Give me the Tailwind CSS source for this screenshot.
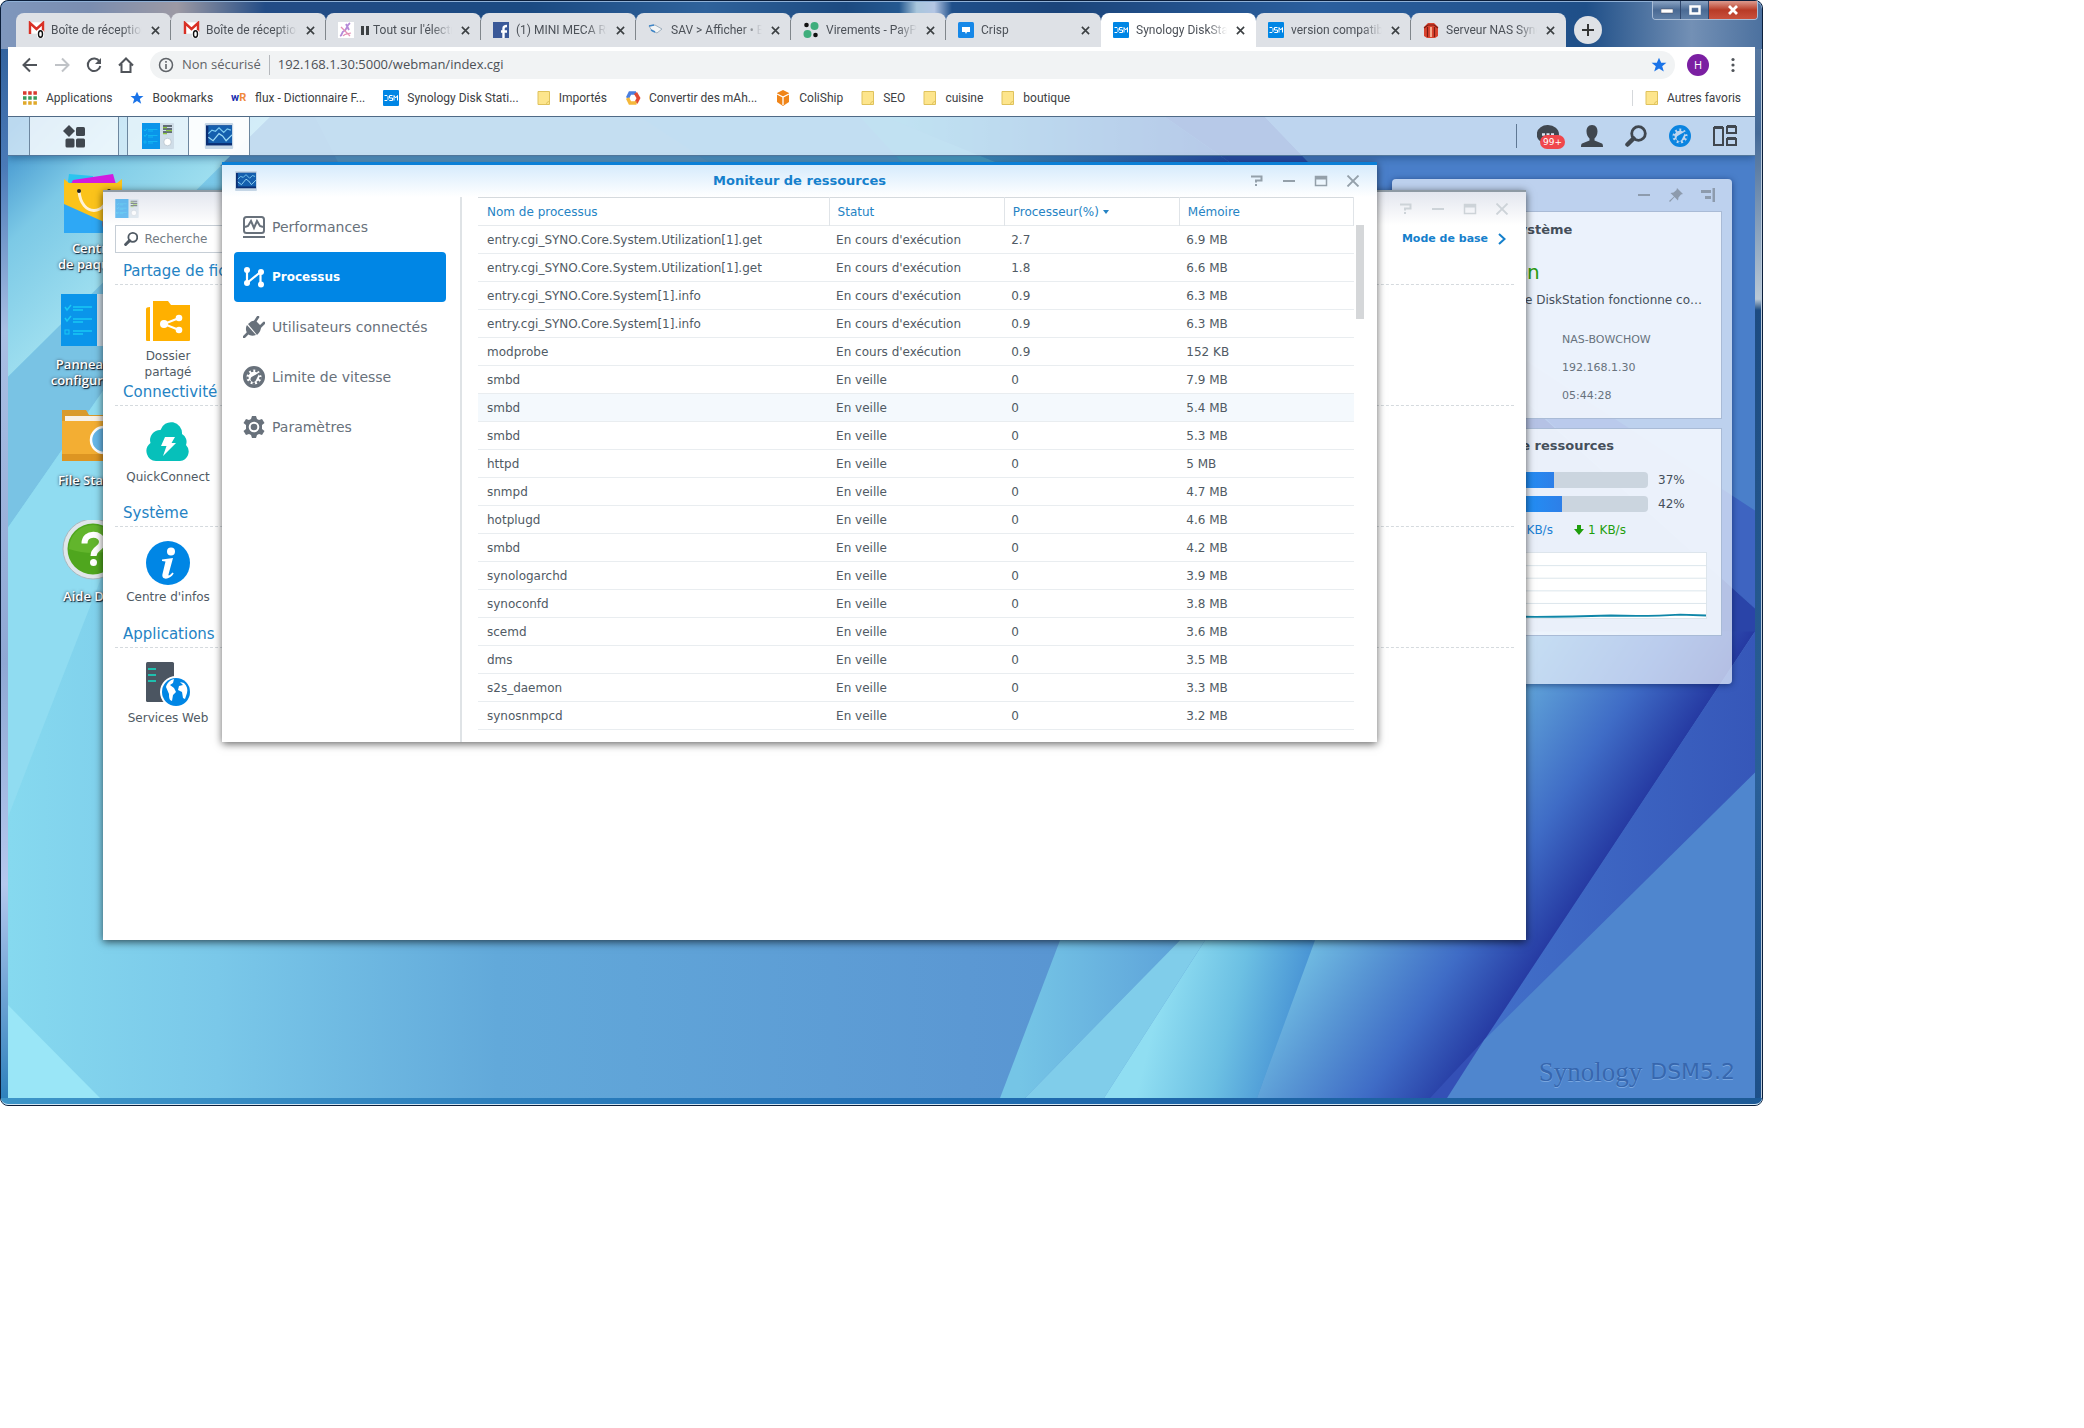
<!DOCTYPE html>
<html lang="fr">
<head>
  <meta charset="UTF-8" />
  <meta name="viewport" content="width=device-width, initial-scale=1.0" />
  <title>Synology DiskStation</title>
  <script src="https://cdn.jsdelivr.net/npm/@tailwindcss/browser@4"></script>
</head>
<body class="min-h-screen bg-white font-['DejaVu_Sans',Verdana,sans-serif] text-xs text-[#505a64]">

  <!-- shared symbols -->
  <svg class="hidden">
    <symbol id="i-x" viewBox="0 0 10 10"><path d="M1 1l8 8M9 1L1 9" stroke="currentColor" stroke-width="1.8" fill="none" /></symbol>
    <symbol id="i-dsm" viewBox="0 0 16 16">
      <rect width="16" height="16" rx="1" fill="#0086e5" />
      <path d="M1.500 5.500h2.500l1 1v3l-1 1H1.500M9.500 5.500H6.500V8h3v2.500H6.300M11 10.500v-5l1.700 2.500 1.800-2.500v5" stroke="#fff" stroke-width="1" fill="none" />
    </symbol>
    <symbol id="i-gmail" viewBox="0 0 18 18">
      <path d="M1 1h15v12H1z" fill="#fff" stroke="#ddd" stroke-width=".6" />
      <path d="M2 13V2l6.500 6L15 2v9" fill="none" stroke="#d93025" stroke-width="2.400" />
      <rect x="9" y="9" width="7" height="8" rx="2" fill="#fff" />
      <ellipse cx="12.500" cy="13" rx="2" ry="3.200" fill="#fff" stroke="#111" stroke-width="1.400" />
    </symbol>
    <symbol id="i-folder" viewBox="0 0 14 16"><path d="M1 1.500h11.500v13H1z" fill="#fde58c" stroke="#dfc25c" /><path d="M9.500 14.500c0-2 1-3 3-3" fill="none" stroke="#dfc25c" /></symbol>
    <symbol id="i-star" viewBox="0 0 16 16"><path d="M8 .8l2.200 5h5.200l-4.200 3.400 1.600 5.300L8 11.400l-4.800 3.100 1.600-5.300L.6 5.800h5.200z" fill="#1a73e8" /></symbol>
    <symbol id="i-search" viewBox="0 0 22 22"><circle cx="13.500" cy="8.500" r="6.800" fill="none" stroke="currentColor" stroke-width="2.800" /><path d="M8.500 13.500L2.500 19.500" stroke="currentColor" stroke-width="4.500" stroke-linecap="round" /></symbol>
    <symbol id="i-gauge" viewBox="0 0 22 22">
      <circle cx="11" cy="11" r="9.300" fill="none" stroke="currentColor" stroke-width="3.400" />
      <circle cx="11" cy="11" r="6.600" fill="none" stroke="currentColor" stroke-width="2.400" stroke-dasharray="2.600 2" />
      <path d="M17 6l-4 8a2.800 2.800 0 1 1-3.600-3.400z" fill="currentColor" />
    </symbol>
    <symbol id="i-monitor" viewBox="0 0 24 22">
      <rect width="24" height="22" rx="1" fill="#c5d6e6" /><rect x="1" y="2" width="22" height="17" fill="#0b2f74" /><rect x="3" y="2" width="20" height="15" fill="#155fae" />
      <path d="M3 9l3-3 3 1 3-3 4 4 3-3 3 1" fill="none" stroke="#7ecbf2" stroke-width="1" /><path d="M3 12l4 3 5-6 3 2 3 4 5-5" fill="none" stroke="#9edcf7" stroke-width="1" />
    </symbol>
    <symbol id="i-panel" viewBox="0 0 64 52">
      <rect width="64" height="52" rx="2" fill="#cfdde8" /><rect width="36" height="52" fill="#0a95ea" />
      <path d="M4 13l2 3 4-5M4 24l2 3 4-5" stroke="#19c8f5" stroke-width="1.500" fill="none" /><rect x="4" y="36" width="4" height="4" fill="none" stroke="#19c8f5" />
      <path d="M12 13h19M12 16h10M12 25h19M12 28h10M12 37h19M12 40h10" stroke="#19c8f5" stroke-width="1.300" />
      <path d="M42 6h18M42 12h18M42 18h18" stroke="#3f4954" stroke-width="3" /><path d="M42 9h8M48 15h12M42 21h8" stroke="#8cc63f" stroke-width="2.500" />
      <circle cx="51" cy="38" r="7.500" fill="#fff" stroke="#b3bfc9" stroke-width="1.500" />
    </symbol>
    <symbol id="i-help" viewBox="0 0 14 12"><path d="M1 1.500h10.500v4H6v2M6 9v2" fill="none" stroke="currentColor" stroke-width="2" /></symbol>
    <symbol id="i-min" viewBox="0 0 14 12"><path d="M1 6h12" stroke="currentColor" stroke-width="2" /></symbol>
    <symbol id="i-max" viewBox="0 0 14 12"><rect x="1.500" y="1.500" width="11" height="9" fill="none" stroke="currentColor" stroke-width="1.500" /><path d="M1 3h12" stroke="currentColor" stroke-width="3" /></symbol>
    <symbol id="i-close" viewBox="0 0 14 12"><path d="M1.500 .5l11 11M12.500 .5l-11 11" stroke="currentColor" stroke-width="1.800" /></symbol>
  </svg>

  <!-- browser window -->
  <div class="relative flex h-[77.45vh] w-[84.6%] flex-col rounded-lg border border-[#0b1e3a] bg-[linear-gradient(180deg,#2a5a94,#4a7ab8_15%,#a9bfe4_30%,#8fa8d4_60%,#b4c8ee_80%,#2a7fbb)] px-[7px] pb-[7px]">
    <div class="absolute inset-y-0 right-0 w-2 rounded-r-lg border-r border-[#bcd] bg-[linear-gradient(180deg,#5f7fa6,#456a97_12%,#b9c8d6_27%,#1d4b80_28%,#2a6098_70%,#1d4f88)]"></div>
    <div class="absolute inset-x-0 bottom-0 h-[7px] rounded-b-lg border-b border-[#d6e8f5] bg-linear-to-r from-[#3d95c8] via-[#1f6eb4] to-[#1d5a96]"></div>
    <div class="absolute inset-x-0 top-0 h-12 rounded-t-lg border-t border-[#8fb0d6] bg-[linear-gradient(90deg,#7f97bd,#7a8db0_5%,#9c99a4_10%,#234c86_15%,#1b4a82_30%,#2f629b_40%,#1c4a80_48%,#245890_51%,#a9c6dc_52%,#b4c6e4_53%,#1f4f8a_54%,#1b447a_60%,#2b5f9e_75%,#1f4f88_90%,#7390b5_96%,#4c719f)]"></div>

    <div class="absolute right-1 top-0 z-10 flex h-[19px] overflow-hidden rounded-b border border-t-0 border-[#a9bdd6] text-white">
      <button aria-label="Réduire" class="grid w-7 place-items-center border-r border-[#30486e] bg-linear-to-b from-[#8ba4c4] via-[#4a6a94] to-[#5f7fa6]"><svg class="h-2 w-3"><rect y="3" width="12" height="4" fill="#fff" stroke="#445" stroke-width=".5" /></svg></button>
      <button aria-label="Agrandir" class="grid w-7 place-items-center border-r border-[#30486e] bg-linear-to-b from-[#8ba4c4] via-[#4a6a94] to-[#5f7fa6]"><svg class="h-[10px] w-3"><rect x="1.500" y="1.500" width="9" height="7" fill="none" stroke="#fff" stroke-width="2.500" /></svg></button>
      <button aria-label="Fermer la fenêtre" class="grid w-12 place-items-center bg-linear-to-b from-[#dc9a8e] via-[#b83a26] to-[#c9503c]"><svg class="h-[10px] w-3" viewBox="0 0 12 10"><path d="M2 1l8 8M10 1L2 9" stroke="#fff" stroke-width="2.800" /></svg></button>
    </div>

    <!-- tabs -->
    <div class="relative mt-3 flex h-[34px] shrink-0 items-start pl-2 font-[Roboto,sans-serif] text-[#4c5158]">
      <div id="tabs" class="flex h-full"></div>
      <button aria-label="Nouvel onglet" class="ml-2 mt-[3px] grid size-7 place-items-center rounded-full bg-[#dee1e6] text-[#333]"><svg class="size-3" viewBox="0 0 12 12"><path d="M6 0v12M0 6h12" stroke="currentColor" stroke-width="2" /></svg></button>
    </div>

    <!-- address bar -->
    <div class="relative flex h-8 shrink-0 items-center gap-4 bg-white pl-[14px] pr-[14px] pt-1 font-['Open_Sans',sans-serif] text-[#5f6368]">
      <button aria-label="Précédent"><svg class="size-4" viewBox="0 0 16 16"><path d="M15 8H2M8 1.500L1.500 8 8 14.500" fill="none" stroke="#50545a" stroke-width="2" /></svg></button>
      <button aria-label="Suivant"><svg class="size-4" viewBox="0 0 16 16"><path d="M1 8h13M8 1.500L14.500 8 8 14.500" fill="none" stroke="#c0c3c7" stroke-width="2" /></svg></button>
      <button aria-label="Actualiser"><svg class="size-4" viewBox="0 0 16 16"><path d="M13.500 4.500A6.300 6.300 0 1 0 14.300 9" fill="none" stroke="#50545a" stroke-width="2" /><path d="M15 1v6H9z" fill="#50545a" /></svg></button>
      <button aria-label="Accueil"><svg class="size-4" viewBox="0 0 16 16"><path d="M1 8.500L8 1.500l7 7M3.500 7v8h9V7" fill="none" stroke="#50545a" stroke-width="2" /></svg></button>
      <div class="flex h-7 flex-1 items-center gap-2 rounded-full bg-[#f1f3f4] px-2 text-[13px]">
        <svg class="size-4" viewBox="0 0 16 16"><circle cx="8" cy="8" r="6.500" fill="none" stroke="#5f6368" stroke-width="1.500" /><path d="M8 7v5M8 4v1.700" stroke="#5f6368" stroke-width="1.600" /></svg>
        <span>Non sécurisé</span>
        <span class="h-5 w-px bg-[#b5b8bc]"></span>
        <input aria-label="Adresse" value="192.168.1.30:5000/webman/index.cgi" class="min-w-0 flex-1 bg-transparent text-[#4c5056] outline-none" />
        <svg class="size-4"><use href="#i-star" /></svg>
      </div>
      <button aria-label="Profil" class="-ml-1 grid size-[22px] place-items-center rounded-full bg-[#7b1fa2] text-[11px] text-white">H</button>
      <button aria-label="Menu" class="w-4"><svg class="h-4 w-4" viewBox="0 0 16 16" fill="#50545a"><circle cx="8" cy="2.500" r="1.600" /><circle cx="8" cy="8" r="1.600" /><circle cx="8" cy="13.500" r="1.600" /></svg></button>
    </div>

    <!-- bookmarks -->
    <div class="relative flex h-[38px] shrink-0 items-center border-b border-[#4f6a86] bg-white px-[14px] font-[Roboto,sans-serif] text-[#3c4043]">
      <nav class="flex flex-1 items-center gap-[18px] whitespace-nowrap">
        <a href="#" class="flex items-center gap-2"><svg class="size-4" viewBox="0 0 16 16"><path d="M1 3h14" stroke="#d93a2f" stroke-width="3.500" stroke-dasharray="3.500 1.700" /><path d="M1 8h14" stroke="#3a9a5a" stroke-width="3.500" stroke-dasharray="3.500 1.700" /><path d="M1 13h14" stroke="#e0a92a" stroke-width="3.500" stroke-dasharray="3.500 1.700" /></svg>Applications</a>
        <a href="#" class="flex items-center gap-2"><svg class="size-[14px]"><use href="#i-star" /></svg>Bookmarks</a>
        <a href="#" class="flex items-center gap-2"><span class="w-4 text-[11px] font-bold leading-4 text-[#1a2fb0]">w<span class="text-[#f08a3c]">R</span></span>flux - Dictionnaire F...</a>
        <a href="#" class="flex items-center gap-2"><svg class="size-4"><use href="#i-dsm" /></svg>Synology Disk Stati...</a>
        <a href="#" class="flex items-center gap-2"><svg class="h-4 w-[14px]"><use href="#i-folder" /></svg>Importés</a>
        <a href="#" class="flex items-center gap-2"><svg class="size-4" viewBox="0 0 16 16" fill="none" stroke-width="3.500"><path d="M2.500 8L5 3h6" stroke="#4a7fe0" /><path d="M10.500 3L13.500 8 11 13" stroke="#e04a35" /><path d="M11.500 13H5L2.500 8" stroke="#f5b83a" /></svg>Convertir des mAh...</a>
        <a href="#" class="flex items-center gap-2"><svg class="size-4" viewBox="0 0 16 16"><path d="M8 0l6 3v9l-6 4-6-4V3z" fill="#f08519" /><path d="M2 4l6 3 6-3M8 7v8" stroke="#fff" stroke-width="1.300" fill="none" /></svg>ColiShip</a>
        <a href="#" class="flex items-center gap-2"><svg class="h-4 w-[14px]"><use href="#i-folder" /></svg>SEO</a>
        <a href="#" class="flex items-center gap-2"><svg class="h-4 w-[14px]"><use href="#i-folder" /></svg>cuisine</a>
        <a href="#" class="flex items-center gap-2"><svg class="h-4 w-[14px]"><use href="#i-folder" /></svg>boutique</a>
      </nav>
      <a href="#" class="flex items-center gap-2"><span class="mr-1 h-4 w-px bg-[#d5d8db]"></span><svg class="h-4 w-[14px]"><use href="#i-folder" /></svg>Autres favoris</a>
    </div>

    <!-- DSM desktop -->
    <div class="relative flex min-h-0 flex-1 flex-col overflow-hidden">
      <svg class="absolute inset-0 h-full w-full" viewBox="8 116 1747 982" preserveAspectRatio="none">
        <defs>
          <linearGradient id="g-base"><stop offset="0" stop-color="#86d9ef" /><stop offset=".12" stop-color="#7ac8e9" /><stop offset=".28" stop-color="#62a9da" /><stop offset=".55" stop-color="#5b98d3" /><stop offset=".7" stop-color="#5591d0" /><stop offset="1" stop-color="#4c7cc8" /></linearGradient>
          <linearGradient id="g-tl" gradientUnits="userSpaceOnUse" x1="8" y1="130" x2="150" y2="270"><stop offset="0" stop-color="#3d8fcc" /><stop offset=".4" stop-color="#7cc9e6" /><stop offset="1" stop-color="#a5e3f1" /></linearGradient>
          <linearGradient id="g-c1" gradientUnits="userSpaceOnUse" x1="1020" y1="0" x2="1170" y2="0"><stop offset="0" stop-color="#75c5e6" /><stop offset="1" stop-color="#5fa5da" /></linearGradient>
          <linearGradient id="g-c2" gradientUnits="userSpaceOnUse" x1="1160" y1="1000" x2="1300" y2="1035"><stop offset="0" stop-color="#90def2" /><stop offset=".5" stop-color="#6cc0e3" /><stop offset="1" stop-color="#458fd3" /></linearGradient>
          <linearGradient id="g-d" gradientUnits="userSpaceOnUse" x1="1315" y1="940" x2="1480" y2="1048"><stop offset="0" stop-color="#70bbe2" /><stop offset=".3" stop-color="#5896d4" /><stop offset=".65" stop-color="#3f6cc6" /><stop offset="1" stop-color="#263ba3" /></linearGradient>
          <linearGradient id="g-e" x1="0" x2="1"><stop offset="0" stop-color="#4270c9" /><stop offset="1" stop-color="#3657b9" /></linearGradient>
          <linearGradient id="g-t" x1="0" x2="1"><stop offset="0" stop-color="#52b8d8" /><stop offset="1" stop-color="#2a4fb0" /></linearGradient>
        </defs>
        <path d="M8 116H1755V1098H8z" fill="url(#g-base)" />
        <path d="M8 116H270L8 376z" fill="url(#g-tl)" />
        <path d="M8 376L103 282V390L8 527z" fill="#79c3e4" />
        <path d="M8 527L103 390V573L30 760 8 817z" fill="#90dcf1" />
        <path d="M8 1005L100 1098H8z" fill="#9ae6f7" />
        <path d="M270 116H640L715 165H220z" fill="#5c9ace" />
        <path d="M315 116H640L715 165H340z" fill="#62a5d4" />
        <path d="M640 116H860L905 165H715z" fill="#5aa5d6" />
        <path d="M860 116H885L1005 165H905z" fill="#54b0d6" />
        <path d="M885 116H1165L1235 165H1005z" fill="url(#g-t)" />
        <path d="M1165 116H1265L1312 165H1235z" fill="#2d4fb0" />
        <path d="M1265 116H1755V514L1400 270 1312 165z" fill="#4a7fca" />
        <path d="M1480 330L1755 510V608L1526 400z" fill="#3e64c1" />
        <path d="M1480 360L1755 608V632L1480 632z" fill="#2a44a8" />
        <path d="M1480 631H1755L1447 1098H1257L1420 631z" fill="url(#g-d)" />
        <path d="M1755 631V773L1483 1042z" fill="url(#g-e)" />
        <path d="M1484 1040L1448 1098H1430z" fill="#3450b6" />
        <path d="M1755 772V1098H1447L1484 1040z" fill="#4f86ce" />
        <path d="M1060 940H1180L1025 1098H1000z" fill="url(#g-c1)" />
        <path d="M1180 940H1205L1104 1098H1025z" fill="#80cdea" />
        <path d="M1205 940H1315L1257 1098H1104z" fill="url(#g-c2)" />
      </svg>

      <!-- task bar -->
      <header class="relative flex h-[39px] shrink-0 border-b border-[#52779c] bg-[#e6f2fb]/75 shadow-[0_2px_8px_rgba(20,60,100,.5)]">
        <button aria-label="Menu principal" class="ml-[21px] grid w-[90px] place-items-center border-x border-[#6d879f] bg-white/55 text-[#40474f]">
          <svg class="size-[23px]" viewBox="0 0 23 23" fill="currentColor"><path d="M6 0l6 6-6 6-6-6z" /><rect x="13" y="2" width="9" height="9" rx="1.500" /><rect x="2.500" y="13.500" width="9" height="9" rx="1.500" /><rect x="13" y="13.500" width="9" height="9" rx="1.500" /></svg>
        </button>
        <button aria-label="Panneau de configuration" class="ml-2 grid w-[62px] place-items-center border-x border-[#6d879f] bg-white/40"><svg class="h-[26px] w-8"><use href="#i-panel" /></svg></button>
        <button aria-label="Moniteur de ressources" class="grid w-[61px] place-items-center border-r border-[#6d879f] bg-white/90"><svg class="h-[26px] w-[30px]"><use href="#i-monitor" /></svg></button>
        <div class="ml-auto flex items-center gap-[22px] pr-[18px] text-[#40474f]">
          <span class="-mr-0.5 h-6 w-px bg-[#5f7894]"></span>
          <button aria-label="Notifications" class="relative"><svg class="size-[22px]" viewBox="0 0 22 22"><path d="M11 0a11 9.500 0 0 1 0 19l-3 3v-3.300A11 9.500 0 0 1 11 0z" fill="currentColor" /><path d="M5 9.500h3M9.500 9.500h3M14 9.500h3" stroke="#dde8f4" stroke-width="2.500" /></svg><span class="absolute -right-1.5 top-2.5 rounded-full bg-[#f0474c] px-[3px] text-[9px] leading-[14px] text-white">99+</span></button>
          <button aria-label="Options"><svg class="size-[22px]" viewBox="0 0 22 22"><path d="M11 0c4 0 5.500 3 5.500 6.500S15 12 13.500 13.500v2L21 18.500c.7.500 1 1.500 1 3.500H0c0-2 .3-3 1-3.500l7.500-3v-2C7 12 5.500 10 5.500 6.500S7 0 11 0z" fill="currentColor" /></svg></button>
          <button aria-label="Rechercher"><svg class="size-[22px]"><use href="#i-search" /></svg></button>
          <button aria-label="Widgets" class="text-[#0a84e0]"><svg class="size-[22px]"><use href="#i-gauge" /></svg></button>
          <button aria-label="Vue d'ensemble"><svg class="h-[22px] w-6" viewBox="0 0 24 22" fill="none" stroke="currentColor" stroke-width="2"><path d="M1 3v17h9V3z" /><path d="M14 2h9v6h-9zM14 14h9v6h-9z" /><path d="M1 2.500h9M14 1.500h9M14 13.500h9" stroke-width="3" /></svg></button>
        </div>
      </header>

      <div class="relative min-h-0 flex-1">
        <!-- desktop shortcuts -->
        <div class="absolute left-[35px] top-4 w-[100px] text-center font-['Open_Sans',sans-serif] text-[13px] font-semibold leading-4 text-white [text-shadow:1px_1px_1px_#123,0_0_3px_#456]">
          <a href="#" class="block h-[116px]"><svg class="mx-auto mb-1 size-16" viewBox="0 0 64 64"><path d="M8 2l24 2v12H6z" fill="#2bc4ef" /><path d="M12 8l40-6 4 14H8z" fill="#d21be0" /><path d="M3 7l5 4h48l5-4v52l-2 2H5l-2-2z" fill="#fbc31b" /><path d="M3 32l58 26v3H3z" fill="#2ea8f5" /><path d="M61 35v26H45C36 50 45 38 61 35z" fill="#e05a4a" /><path d="M18 19c2 26 28 26 30 0" fill="none" stroke="#fff3d8" stroke-width="3" /><circle cx="18" cy="19" r="2" fill="#222" /><circle cx="48" cy="19" r="2" fill="#222" /></svg>Centre<br />de paquets</a>
          <a href="#" class="block h-[116px]"><svg class="mx-auto mb-1 h-16 w-16" viewBox="0 -6 64 64"><use href="#i-panel" width="64" height="52" /></svg>Panneau de<br />configuration</a>
          <a href="#" class="block h-[116px]"><svg class="mx-auto mb-1 size-16" viewBox="0 0 64 64"><path d="M1 6h24l3 5h34v14H1z" fill="#d99a2c" /><path d="M4 12h56v6H4z" fill="#f7f0e6" /><path d="M1 17h62v38q0 2-2 2H3q-2 0-2-2z" fill="#f3ae33" /><path d="M1 50h62v7H1z" fill="#dd9522" /><circle cx="43" cy="36" r="13" fill="#68b7e8" stroke="#fff" stroke-width="2.500" /></svg>File Station</a>
          <a href="#" class="block h-[116px]"><svg class="mx-auto mb-1 size-16" viewBox="0 0 64 64"><circle cx="32" cy="29" r="30" fill="#dfe6ea" stroke="#a9b8bf" stroke-width="1" /><circle cx="32" cy="29" r="25.500" fill="#4fa61e" /><path d="M8 29a24 24 0 0 1 48 0q-24 8-48 0z" fill="#62b52c" /><path d="M23.500 23.500c0-12 17.500-11 17.500-1.500 0 7-8.500 6-8.500 14" fill="none" stroke="#fff" stroke-width="6" /><circle cx="32.500" cy="42.500" r="3.500" fill="#fff" /></svg>Aide DSM</a>
        </div>

        <!-- widget pane -->
        <aside class="absolute bottom-[414px] right-[23px] top-[23px] flex w-[340px] flex-col gap-[9px] rounded-sm bg-[#e4ecf9]/75 px-[10px] text-[#454f5a] shadow-[0_1px_6px_rgba(10,30,80,.6)]">
          <div class="-mb-[9px] flex h-8 shrink-0 items-center justify-end gap-[18px] pr-[7px] text-[#8d9bad]">
            <button aria-label="Réduire les widgets"><svg class="h-3 w-[14px]"><use href="#i-min" /></svg></button>
            <button aria-label="Épingler"><svg class="size-[14px]" viewBox="0 0 14 14"><path d="M8 0l6 6-2 .5-2.500 3-.5 3L5.500 9 1 14l-1-1 5-4.500L1.500 5l3-.5 3-2.500z" fill="currentColor" /></svg></button>
            <button aria-label="Ancrer"><svg class="size-[14px]" viewBox="0 0 14 14"><path d="M0 3.500h10M4 9.500h6M13 0v14" stroke="currentColor" stroke-width="3" /></svg></button>
          </div>
          <section class="h-[208px] shrink-0 border border-[#a9bbd6] bg-[#f3f8fe]/85 pl-[38px] pr-[15px] pt-1.5">
            <h2 class="h-[44px] pt-1 text-[13px] font-bold leading-4">Santé du système</h2>
            <div class="pl-[60px]">
              <p class="text-[20px] leading-5 text-[#2a9b12]">Bon</p>
              <p class="mt-2.5 truncate leading-4">Votre DiskStation fonctionne correctement.</p>
              <dl class="mt-[18px] pl-[61px] text-[11px] leading-7 text-[#68727d]">
                <dd>NAS-BOWCHOW</dd><dd>192.168.1.30</dd><dd>05:44:28</dd>
              </dl>
            </div>
          </section>
          <section class="h-[208px] shrink-0 border border-[#a9bbd6] bg-[#f3f8fe]/85 pl-[38px] pr-[14px] pt-[9px]">
            <h2 class="h-[34px] text-[13px] font-bold leading-4">Moniteur de ressources</h2>
            <div class="mb-2 flex h-4 items-center gap-2.5"><span class="w-12">CPU</span><div class="h-4 w-[149px] overflow-hidden rounded-sm bg-[#cbd5df]"><div class="h-full bg-linear-to-r from-[#0d9bff] to-[#2d7fe8]" style="width:37%"></div></div><span>37%</span></div>
            <div class="mb-2 flex h-4 items-center gap-2.5"><span class="w-12">RAM</span><div class="h-4 w-[149px] overflow-hidden rounded-sm bg-[#cbd5df]"><div class="h-full bg-linear-to-r from-[#0d9bff] to-[#2d7fe8]" style="width:42%"></div></div><span>42%</span></div>
            <p class="flex h-5 items-center gap-1 pl-[60px] text-[#1b7fd4]"><span class="w-[69px] pl-[14px]">1 KB/s</span><svg class="size-[10px]" viewBox="0 0 10 10"><path d="M3 0h4v4h3L5 10 0 4h3z" fill="#1f9e0c" /></svg><span class="text-[#1f9e0c]">1 KB/s</span></p>
            <svg class="mt-3 h-[67px] w-full border border-[#dde5ec] bg-white" viewBox="0 0 266 67" preserveAspectRatio="none"><path d="M0 13h266M0 26h266M0 39h266M0 52h266" stroke="#dbe5ec" /><path d="M0 65.500h60q50 1 110-1 40 1 70-1l26 1" fill="none" stroke="#0f86a8" stroke-width="2" /></svg>
          </section>
        </aside>

        <!-- control panel window -->
        <div class="absolute bottom-[158px] left-[95px] right-[229px] top-[34px] border-t-2 border-[#8e9aa4] bg-white px-3 shadow-[0_2px_8px_rgba(0,0,0,.65)]">
          <div class="-mx-3 flex h-[33px] items-center justify-between bg-linear-to-b from-[#e3e6ee] to-white pl-3 pr-[17px]">
            <svg class="h-[19px] w-6 opacity-60"><use href="#i-panel" /></svg>
            <div class="flex gap-[18px] text-[#cdd3d8]">
              <button aria-label="Aide"><svg class="h-3 w-[14px]"><use href="#i-help" /></svg></button>
              <button aria-label="Réduire"><svg class="h-3 w-[14px]"><use href="#i-min" /></svg></button>
              <button aria-label="Agrandir"><svg class="h-3 w-[14px]"><use href="#i-max" /></svg></button>
              <button aria-label="Fermer"><svg class="h-3 w-[14px]"><use href="#i-close" /></svg></button>
            </div>
          </div>
          <div class="flex h-7 items-center justify-between">
            <label class="flex h-7 w-[210px] items-center gap-1.5 border border-[#c6ced6] pl-2 text-[#505a64]"><svg class="size-4"><use href="#i-search" /></svg><input placeholder="Recherche" aria-label="Recherche" class="w-full outline-none placeholder:text-[#737b84]" /></label>
            <button class="flex items-center gap-2.5 pr-2 text-[11px] font-bold text-[#1580cc]">Mode de base<svg class="h-3 w-2" viewBox="0 0 8 12"><path d="M1 1l5.500 5L1 11" fill="none" stroke="currentColor" stroke-width="2" /></svg></button>
          </div>
          <section class="h-[121px] pt-2">
            <h2 class="h-6 border-b border-dashed border-[#d5dade] pl-2 text-[15px] leading-5 text-[#2583c4]">Partage de fichiers</h2>
            <a href="#" class="block w-[106px] pt-4 text-center leading-4">
              <svg class="mx-auto mb-1.5 h-[41px] w-11" viewBox="0 0 44 41"><path d="M7 0h15l3 4h19v35q0 1-1 1H7z" fill="#ffb000" /><path d="M0 8q0-2 4-2v34H1q-1 0-1-1z" fill="#ffb000" /><path d="M33 17L18 23l15 6" fill="none" stroke="#fff" stroke-width="2" /><circle cx="18" cy="23" r="4" fill="#fff" /><circle cx="33" cy="17" r="3.300" fill="#fff" /><circle cx="33" cy="29" r="3.300" fill="#fff" /></svg>Dossier<br />partagé</a>
          </section>
          <section class="h-[121px] pt-2">
            <h2 class="h-6 border-b border-dashed border-[#d5dade] pl-2 text-[15px] leading-5 text-[#2583c4]">Connectivité</h2>
            <a href="#" class="block w-[106px] pt-4 text-center leading-4">
              <svg class="mx-auto mb-1.5 h-[41px] w-11" viewBox="0 0 44 41"><path d="M10 39a10 10 0 0 1-5.500-18A10 10 0 0 1 14.500 8 11 11 0 0 1 36 12a9 9 0 0 1 4 11A9.500 9.500 0 0 1 34 39z" fill="#06c0ba" /><path d="M19 15h10l-3.500 6H30L17 34l3.500-10H15z" fill="#fff" /></svg>QuickConnect</a>
          </section>
          <section class="h-[121px] pt-2">
            <h2 class="h-6 border-b border-dashed border-[#d5dade] pl-2 text-[15px] leading-5 text-[#2583c4]">Système</h2>
            <a href="#" class="block w-[106px] pt-[14px] text-center leading-4">
              <svg class="mx-auto mb-1 h-11 w-11" viewBox="0 0 44 44"><circle cx="22" cy="22" r="22" fill="#0086e5" /><circle cx="25" cy="10.500" r="4" fill="#fff" /><path d="M16 18.500l11-1.500-4.500 16.500c-.3 1.500 1 1.500 4-2l1.200 1C24 39 15 39.500 16.500 33l3-12.500-3.500-.6z" fill="#fff" /></svg>Centre d'infos</a>
          </section>
          <section class="h-[121px] pt-2">
            <h2 class="h-6 border-b border-dashed border-[#d5dade] pl-2 text-[15px] leading-5 text-[#2583c4]">Applications</h2>
            <a href="#" class="block w-[106px] pt-[14px] text-center leading-4">
              <svg class="mx-auto mb-1 h-11 w-11" viewBox="0 0 44 44"><rect width="28" height="40" rx="1.500" fill="#4b5561" /><path d="M2 7h8M2 13h8M2 19h8" stroke="#1fbfae" stroke-width="2" /><circle cx="30" cy="30" r="16" fill="#fff" /><circle cx="30" cy="30" r="14" fill="#0086e5" /><path d="M20 25c1-4 4-7 8-8l-1 4-3 2 4 3 2 4-3 3-1 6c-3-1-3-4-3-7zM34 20l4 1c3 3 4 6 3 10l-2 6-2-1-1-6-4-2 1-4 4-1z" fill="#fff" /></svg>Services Web</a>
          </section>
        </div>

        <!-- resource monitor window -->
        <main class="absolute left-[214px] right-[378px] top-1.5 border-t-[3px] border-[#0b7fd6] bg-white shadow-[0_2px_8px_rgba(0,0,0,.6)]">
          <div class="relative flex h-8 items-center justify-between bg-linear-to-b from-[#d6ebfc] to-white pl-3 pr-[17px]">
            <svg class="h-5 w-6"><use href="#i-monitor" /></svg>
            <h1 class="absolute inset-x-20 text-center text-[13px] font-bold text-[#1580cc]">Moniteur de ressources</h1>
            <div class="flex gap-[18px] text-[#94a0aa]">
              <button aria-label="Aide"><svg class="h-3 w-[14px]"><use href="#i-help" /></svg></button>
              <button aria-label="Réduire"><svg class="h-3 w-[14px]"><use href="#i-min" /></svg></button>
              <button aria-label="Agrandir"><svg class="h-3 w-[14px]"><use href="#i-max" /></svg></button>
              <button aria-label="Fermer"><svg class="h-3 w-[14px]"><use href="#i-close" /></svg></button>
            </div>
          </div>
          <div class="flex">
            <nav class="w-60 shrink-0 border-r-2 border-[#dfe3e6] pl-3 pr-[14px] pt-[5px] text-sm text-[#68717b]">
              <a href="#" class="flex h-[50px] items-center gap-[7px] pl-[9px]"><svg class="size-[22px]" viewBox="0 0 22 22" fill="none" stroke="currentColor" stroke-width="2"><rect x="1" y="1" width="20" height="16" rx="2.500" /><path d="M2 11l3-1 3-5 3 7 3-7 3 5 3 1M0 21h22" /></svg>Performances</a>
              <a href="#" class="flex h-[50px] items-center gap-[7px] rounded-sm bg-[#0086e5] pl-[9px] font-semibold text-white"><svg class="size-[22px]" viewBox="0 0 22 22" fill="currentColor"><path d="M4 5v12L17.500 6v12" fill="none" stroke="currentColor" stroke-width="2.200" /><circle cx="4" cy="4" r="3" /><circle cx="4" cy="17" r="3" /><circle cx="18" cy="6" r="3" /><circle cx="18" cy="18.500" r="3" /></svg><span class="text-xs">Processus</span></a>
              <a href="#" class="flex h-[50px] items-center gap-[7px] pl-[9px]"><svg class="size-[22px]" viewBox="0 0 22 22"><path d="M4 9l9 10c-3 1-6 1-8-1s-3-6-1-9z" fill="currentColor" /><path d="M5 8c3-3 5-4 8-3l5 5c0 4-1 6-4 9z" fill="currentColor" /><path d="M1 21l5-5M11 7l4-6M16 12l5-5" stroke="currentColor" stroke-width="2.600" stroke-linecap="round" /></svg>Utilisateurs connectés</a>
              <a href="#" class="flex h-[50px] items-center gap-[7px] pl-[9px]"><svg class="size-[22px]"><use href="#i-gauge" /></svg>Limite de vitesse</a>
              <a href="#" class="flex h-[50px] items-center gap-[7px] pl-[9px]"><svg class="size-[22px]" viewBox="0 0 22 22"><path d="M8 3l1-3h4l1 3 2 1 3-1 2.500 4L19 9v4l2.500 2-2.500 4-3-1-2 1-1 3H9l-1-3-2-1-3 1-2.500-4L3 13V9L.5 7 3 3l3 1z" fill="currentColor" /><circle cx="11" cy="11" r="4.300" fill="none" stroke="#fff" stroke-width="2" /></svg>Paramètres</a>
            </nav>
            <div class="flex min-w-0 flex-1 pb-3 pl-4 pr-[13px]">
              <table class="w-full table-fixed border-t border-[#d5dade]">
                <thead class="text-[#2583c4]">
                  <tr class="h-7 border-b border-[#e6eaed]">
                    <th class="w-[40.1%] border-r border-[#e0e4e8] pl-[9px] text-left font-normal">Nom de processus</th>
                    <th class="w-[20%] border-r border-[#e0e4e8] pl-2 text-left font-normal">Statut</th>
                    <th class="w-[20%] border-r border-[#e0e4e8] pl-2 text-left font-normal">Processeur(%) <svg class="inline h-1 w-1.5" viewBox="0 0 6 4"><path d="M0 0h6L3 4z" fill="currentColor" /></svg></th>
                    <th class="border-r border-[#e0e4e8] pl-2 text-left font-normal">Mémoire</th>
                  </tr>
                </thead>
                <tbody id="rows"></tbody>
              </table>
              <div class="ml-0.5 mt-7 h-[94px] w-2 shrink-0 bg-[#d5d7d9]"></div>
            </div>
          </div>
        </main>

        <p class="absolute bottom-2.5 right-5 flex items-center gap-2 text-[#3767ae] [text-shadow:0_1px_0_#78a6e0]"><span class="font-['Liberation_Serif',serif] text-[27px] leading-8">Synology</span><span class="text-[22px] leading-8">DSM5.2</span></p>
      </div>
    </div>
  </div>

  <script>
    const icons = {
      gmail: '<svg class="size-[18px]"><use href="#i-gmail" /></svg>',
      dsm: '<svg class="size-4"><use href="#i-dsm" /></svg>',
      pen: '<svg class="size-4" viewBox="0 0 16 16"><path d="M0 0h16v16H0z" fill="#fff" /><path d="M2 14c3-1 1-4 4-5s2-5 6-8M8 2l3 6" fill="none" stroke="#b58ad8" stroke-width="1.800" /><path d="M5 14c2-3 5-2 8-3M3 5l4 4 5 5" fill="none" stroke="#e58fb5" stroke-width="1.300" /></svg>',
      fb: '<svg class="size-4" viewBox="0 0 16 16"><path d="M0 0h16v16H0z" fill="#3b5998" /><path d="M10.500 16V9.500M8 9.500h6M10.500 10V6.500q0-2.500 3.500-2.500" fill="none" stroke="#fff" stroke-width="2.400" /></svg>',
      sav: '<svg class="size-4" viewBox="0 0 16 16"><path d="M1 4l6-1 7 4-5 4-5-2z" fill="#f2f4f5" stroke="#9fb0bf" /><path d="M1 4l5-1M3 8l4 2" stroke="#3f86c8" stroke-width="1.500" /></svg>',
      dots: '<svg class="size-4" viewBox="0 0 16 16" fill="#3fae7c"><circle cx="3.500" cy="3" r="2.300" fill="#111" /><circle cx="11.500" cy="4" r="4" /><circle cx="4.500" cy="12" r="4" /><circle cx="12.500" cy="13" r="2.300" fill="#111" /></svg>',
      crisp: '<svg class="size-4" viewBox="0 0 16 16"><rect width="16" height="16" rx="1.500" fill="#1688e8" /><path d="M4 5h8v5H9l-1 2-1-2H4z" fill="#fff" /></svg>',
      bag: '<svg class="size-4" viewBox="0 0 16 16"><path d="M1 5l4-4h6l4 4v9l-3 2H4l-3-2z" fill="#d8432f" /><path d="M1 6l4-3h6l4 3M4.500 5v10M11.500 5v10" fill="none" stroke="#7d1c12" stroke-width="1.200" /><path d="M7 5h2v10H7z" fill="#f6a98a" /></svg>'
    };
    const tabs = [
      ['gmail', 'Boîte de réception'], ['gmail', 'Boîte de réception'],
      ['pen', '<svg class="mr-1 inline h-[9px] w-2" viewBox="0 0 8 9"><path d="M1.500 0v9M6.500 0v9" stroke="#3c4043" stroke-width="3" /></svg>Tout sur l\'électricité'],
      ['fb', '(1) MINI MECA RC'], ['sav', 'SAV &gt; Afficher • Bow'], ['dots', 'Virements - PayPal'],
      ['crisp', 'Crisp'], ['dsm', 'Synology DiskStation'], ['dsm', 'version compatible'], ['bag', 'Serveur NAS Synology']
    ];
    document.getElementById('tabs').innerHTML = tabs.map(([icon, title], i) => `
      <div class="${i === 7 ? 'bg-white' : 'bg-[#dee1e6]'} flex w-[155px] items-center rounded-t-lg pl-3">
        <span class="w-[23px]">${icons[icon]}</span>
        <span class="w-[91px] overflow-hidden whitespace-nowrap [mask-image:linear-gradient(90deg,#000_78%,transparent)]">${title}</span>
        <button aria-label="Fermer l'onglet" class="ml-[9px] text-[#3c4043]"><svg class="size-[9px]"><use href="#i-x" /></svg></button>
        <span class="${i === 6 || i === 7 || i === 9 ? 'invisible' : ''} ml-auto h-5 w-px bg-[#80868b]"></span>
      </div>`).join('');

    const run = "En cours d'exécution", idle = 'En veille';
    const processes = [
      ['entry.cgi_SYNO.Core.System.Utilization[1].get', run, '2.7', '6.9 MB'],
      ['entry.cgi_SYNO.Core.System.Utilization[1].get', run, '1.8', '6.6 MB'],
      ['entry.cgi_SYNO.Core.System[1].info', run, '0.9', '6.3 MB'],
      ['entry.cgi_SYNO.Core.System[1].info', run, '0.9', '6.3 MB'],
      ['modprobe', run, '0.9', '152 KB'],
      ['smbd', idle, '0', '7.9 MB'],
      ['smbd', idle, '0', '5.4 MB'],
      ['smbd', idle, '0', '5.3 MB'],
      ['httpd', idle, '0', '5 MB'],
      ['snmpd', idle, '0', '4.7 MB'],
      ['hotplugd', idle, '0', '4.6 MB'],
      ['smbd', idle, '0', '4.2 MB'],
      ['synologarchd', idle, '0', '3.9 MB'],
      ['synoconfd', idle, '0', '3.8 MB'],
      ['scemd', idle, '0', '3.6 MB'],
      ['dms', idle, '0', '3.5 MB'],
      ['s2s_daemon', idle, '0', '3.3 MB'],
      ['synosnmpcd', idle, '0', '3.2 MB']
    ];
    document.getElementById('rows').innerHTML = processes.map((p, i) => `
      <tr class="${i === 6 ? 'bg-[#f4f9fd]' : ''} h-7 border-b border-[#e9edf0]">
        ${p.map((v, c) => `<td class="${c ? 'pl-[7px]' : 'pl-[9px]'}">${v}</td>`).join('')}
      </tr>`).join('');
  </script>
</body>
</html>
